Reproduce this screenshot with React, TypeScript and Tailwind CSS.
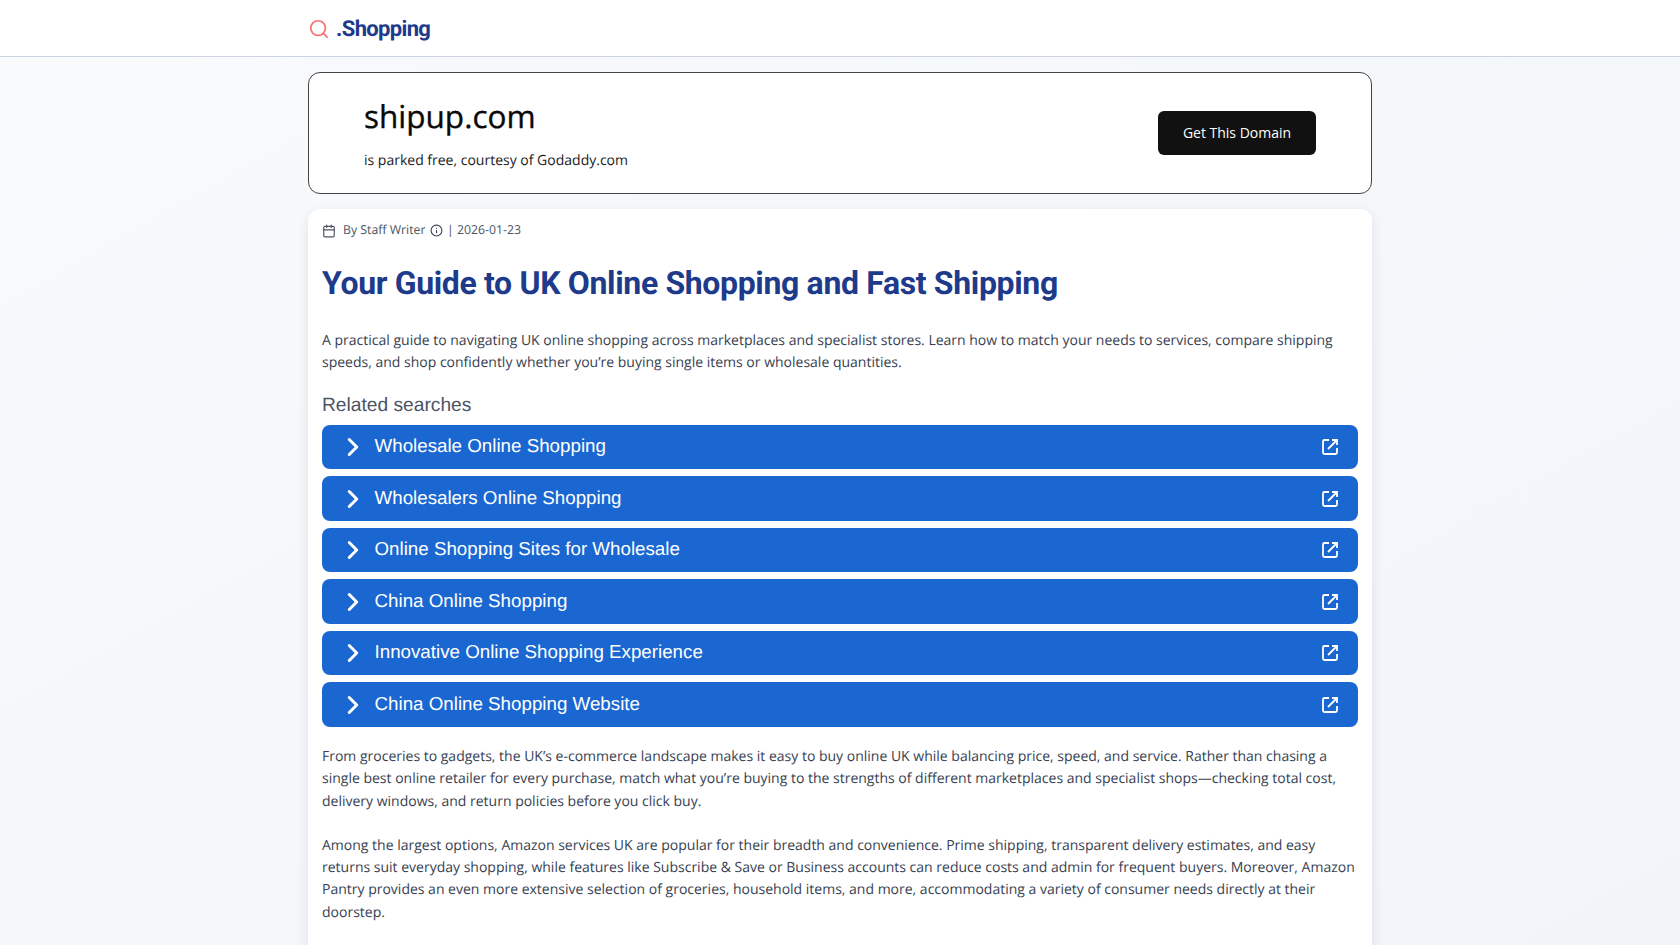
import { ChevronRight, Calendar, Info, Search } from 'lucide-react'

const searches = [
  'Wholesale Online Shopping',
  'Wholesalers Online Shopping',
  'Online Shopping Sites for Wholesale',
  'China Online Shopping',
  'Innovative Online Shopping Experience',
  'China Online Shopping Website',
]

function ExternalIcon() {
  return (
    <svg width="18" height="18" viewBox="0 0 18 18" fill="none" stroke="currentColor" strokeWidth="1.8" className="shrink-0">
      <path d="M8 2H3.5A1.5 1.5 0 0 0 2 3.5v11A1.5 1.5 0 0 0 3.5 16h11a1.5 1.5 0 0 0 1.5-1.5V10" />
      <path d="M7 11 15.5 2.5" />
      <path d="M11 2h5v5" />
    </svg>
  )
}

function SearchRow({ label }: { label: string }) {
  return (
    <a className="flex h-[44.5px] items-center rounded-lg bg-[#1a67d2] pl-[16px] pr-[19px] text-white">
      <ChevronRight size={30} strokeWidth={2.4} className="shrink-0" />
      <span className="ml-[6.5px] min-w-0 flex-1 -translate-y-px font-['Liberation_Sans',Arial,sans-serif] text-[18.75px] leading-7">{label}</span>
      <ExternalIcon />
    </a>
  )
}

export default function App() {
  return (
    <div className="h-[945px] overflow-hidden bg-linear-to-br from-[#f8fafc] to-[#f1f5f9] font-['Open_Sans',sans-serif] [text-rendering:geometricPrecision]">
      <header className="h-[57px] border-b border-[#cbd5e1] bg-white">
        <div className="mx-auto flex h-14 w-[1064px] items-center">
          <Search size={22} strokeWidth={1.9} className="mt-[2px] text-[#f87171]" />
          <span className="ml-[6px] mt-[2px] font-['Roboto',sans-serif] text-[22px] font-bold tracking-[-0.65px] text-[#1e3a8a]">.Shopping</span>
        </div>
      </header>

      <main className="mx-auto flex w-[1064px] flex-col gap-[15px] pt-[15px]">
        <section className="flex h-[122px] items-center justify-between rounded-xl border border-[#444] bg-white pl-[55px] pr-[55px]">
          <div>
            <h2 className="text-[31.5px] font-normal leading-[42px] text-[#0a0a0a] [-webkit-text-stroke:0.35px_#0a0a0a]">shipup.com</h2>
            <p className="mt-[13px] text-[14px] leading-5 text-[#1a1a1a]">is parked free, courtesy of Godaddy.com</p>
          </div>
          <button type="button" className="h-11 w-[158px] rounded-md bg-[#111] pb-[2px] text-[14px] text-white">Get This Domain</button>
        </section>

        <article className="rounded-t-xl bg-white px-[14px] pb-10 pt-[14px] shadow-[0_4px_12px_rgba(15,23,42,0.1)]">
          <div className="flex h-[15px] items-center text-[12.3px] text-[#4b5563]">
            <Calendar size={14} />
            <span className="ml-[7px]">By Staff Writer</span>
            <Info size={13} className="ml-[4px] text-[#374151]" />
            <span className="ml-[4.5px]">| 2026-01-23</span>
          </div>

          <h1 className="mt-[25px] font-['Roboto',sans-serif] text-[32px] font-bold leading-10 tracking-[-0.35px] text-[#1e3a8a]">
            Your Guide to UK Online Shopping and Fast Shipping
          </h1>

          <p className="mt-[27px] text-[14px] leading-[22.4px] text-[#374151]">
            A practical guide to navigating UK online shopping across marketplaces and specialist stores. Learn how to match your needs to services, compare shipping speeds, and shop confidently whether you’re buying single items or wholesale quantities.
          </p>

          <h3 className="mt-[17px] font-['Liberation_Sans',Arial,sans-serif] text-[19.2px] font-normal leading-7 text-[#4b5563]">Related searches</h3>

          <div className="mt-[5px] flex flex-col gap-[7px]">
            {searches.map((s) => (
              <SearchRow key={s} label={s} />
            ))}
          </div>

          <p className="mt-[19px] text-[14px] leading-[22.4px] text-[#374151]">
            From groceries to gadgets, the UK’s e-commerce landscape makes it easy to buy online UK while balancing price, speed, and service. Rather than chasing a single best online retailer for every purchase, match what you’re buying to the strengths of different marketplaces and specialist shops—checking total cost, delivery windows, and return policies before you click buy.
          </p>
          <p className="mt-[21.5px] text-[14px] leading-[22.4px] text-[#374151]">
            Among the largest options, Amazon services UK are popular for their breadth and convenience. Prime shipping, transparent delivery estimates, and easy returns suit everyday shopping, while features like Subscribe &amp; Save or Business accounts can reduce costs and admin for frequent buyers. Moreover, Amazon Pantry provides an even more extensive selection of groceries, household items, and more, accommodating a variety of consumer needs directly at their doorstep.
          </p>
        </article>
      </main>
    </div>
  )
}
